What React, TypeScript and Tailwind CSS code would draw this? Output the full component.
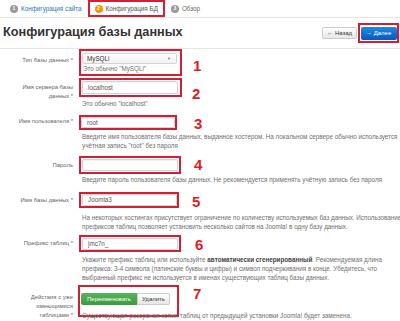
import React from "react";

const RED = "border-[#d21f35]";

function Num({ n, cls }: { n: string; cls: string }) {
  return (
    <div className={`h-[15px] text-[15px] font-bold leading-none text-[#e01b22] ${cls}`}>{n}</div>
  );
}

function Input({ value, cls }: { value: string; cls: string }) {
  return (
    <div
      className={`flex items-center rounded-[2px] border border-[#d4d4d4] bg-white pl-[5px] text-[6.3px] text-[#555] shadow-[inset_0_1px_1px_rgba(0,0,0,0.06)] ${cls}`}
    >
      {value}
    </div>
  );
}

function Help({ children, cls = "" }: { children: React.ReactNode; cls?: string }) {
  return <div className={`whitespace-nowrap text-[6.3px] leading-[9px] text-[#6f6f6f] ${cls}`}>{children}</div>;
}

function Label({ children, cls = "" }: { children: React.ReactNode; cls?: string }) {
  return (
    <div className={`w-[74px] shrink-0 pr-[1px] text-right text-[5.9px] leading-[9px] text-[#666] ${cls}`}>
      {children}
    </div>
  );
}

export default function App() {
  return (
    <div className="h-[321px] w-[400px] overflow-hidden bg-white font-['Liberation_Sans',Arial,sans-serif]">
      {/* Tabs */}
      <div className="flex h-[18px] items-center border-b border-[#e6e6e6] pl-[10px] text-[6.3px]">
        <div className="flex items-center gap-[3px]">
          <span className="flex h-[8px] w-[8px] items-center justify-center rounded-full bg-[#999] text-[5px] font-bold text-white">1</span>
          <span className="text-[#2a78be]">Конфигурация сайта</span>
        </div>
        <div className={`ml-[6px] flex h-[17px] items-center gap-[3px] border-2 ${RED} pl-[5px] pr-[5px]`}>
          <span className="flex h-[8px] w-[8px] items-center justify-center rounded-full bg-[#f89406] text-[5px] font-bold text-white">2</span>
          <span className="text-[#555]">Конфигурация БД</span>
        </div>
        <div className="ml-[6px] flex items-center gap-[3px]">
          <span className="flex h-[8px] w-[8px] items-center justify-center rounded-full bg-[#999] text-[5px] font-bold text-white">3</span>
          <span className="text-[#666]">Обзор</span>
        </div>
      </div>

      {/* Header */}
      <div className="flex h-[31px] items-center justify-between border-b border-[#e6e6e6] pl-[3px] pr-[1px]">
        <div className="text-[12.7px] font-bold text-[#333]">Конфигурация базы данных</div>
        <div className="flex items-center gap-[1px]">
          <div className="flex h-[12px] w-[35px] items-center justify-center gap-[2px] rounded-[2px] border border-[#ccc] bg-gradient-to-b from-white to-[#e6e6e6] text-[6px] text-[#333]">
            <span className="text-[6px]">←</span>Назад
          </div>
          <div className={`flex h-[20px] w-[41px] items-center justify-center border-2 ${RED}`}>
            <div className="flex h-[13px] w-[36px] items-center justify-center gap-[2px] rounded-[2px] bg-gradient-to-b from-[#1f8ae0] to-[#0a58c2] text-[6px] text-white">
              <span className="text-[6px]">→</span>Далее
            </div>
          </div>
        </div>
      </div>

      {/* Row 1 */}
      <div className="flex h-[27px] items-start">
        <Label cls="pt-[7px]">Тип базы данных *</Label>
        <div className={`ml-[5px] h-[27px] w-[103px] border-2 ${RED} pl-[1px] pt-[2px]`}>
          <div className="flex h-[11px] w-[95px] items-center justify-between rounded-[2px] border border-[#d4d4d4] bg-gradient-to-b from-white to-[#f1f1f1] pl-[4px] pr-[5px] text-[6.3px] text-[#333]">
            <span>MySQLi</span>
            <span className="text-[4px] text-[#777]">▼</span>
          </div>
          <Help cls="pl-[1px]">Это обычно "MySQLi"</Help>
        </div>
        <Num n="1" cls="ml-[11px] mt-[9px]" />
      </div>

      {/* Row 2 */}
      <div className="mt-[2px] flex items-start">
        <Label cls="pt-[5px]">
          Имя сервера базы
          <br />
          данных *
        </Label>
        <div className="ml-[5px]">
          <div className="flex h-[19px] items-start">
            <div className={`h-[19px] w-[103px] border-2 ${RED} pl-[1px] pt-[1px]`}>
              <Input value="localhost" cls="h-[13px] w-[96px]" />
            </div>
            <Num n="2" cls="ml-[10px] mt-[8px]" />
          </div>
          <Help cls="mt-[2px] pl-[3px]">Это обычно "localhost"</Help>
        </div>
      </div>

      {/* Row 3 */}
      <div className="mt-[7px] flex items-start">
        <Label cls="pt-[2px]">Имя пользователя *</Label>
        <div className="ml-[5px]">
          <div className="flex h-[15px] items-start">
            <div className={`h-[15px] w-[98px] border-2 ${RED}`}>
              <Input value="root" cls="h-[11px] w-[94px]" />
            </div>
            <Num n="3" cls="ml-[17px] mt-[1px]" />
          </div>
          <Help cls="mt-[2px] pl-[3px]">
            Введите имя пользователя базы данных, выданное хостером. На локальном сервере обычно используется
            <br />
            учётная запись "root" без пароля
          </Help>
        </div>
      </div>

      {/* Row 4 */}
      <div className="mt-[6px] flex items-start">
        <Label cls="pt-[5px]">Пароль</Label>
        <div className="ml-[5px]">
          <div className="flex h-[18px] items-start">
            <div className={`h-[18px] w-[102px] border-2 ${RED} pl-[1px] pt-[1px]`}>
              <Input value="" cls="h-[12px] w-[96px]" />
            </div>
            <Num n="4" cls="ml-[13px] mt-[1px]" />
          </div>
          <Help cls="mt-[1px] pl-[3px]">
            Введите пароль пользователя базы данных. Не рекомендуется применять учётную запись без пароля
          </Help>
        </div>
      </div>

      {/* Row 5 */}
      <div className="mt-[8px] flex items-start">
        <Label cls="pt-[4px]">Имя базы данных *</Label>
        <div className="ml-[5px]">
          <div className="flex h-[16px] items-start">
            <div className={`h-[16px] w-[100px] border-2 ${RED} pl-[1px]`}>
              <Input value="Joomla3" cls="h-[12px] w-[95px]" />
            </div>
            <Num n="5" cls="ml-[13px] mt-[2px]" />
          </div>
          <Help cls="mt-[5px] pl-[3px] leading-[8.5px]">
            На некоторых хостингах присутствует ограничение по количеству используемых баз данных. Использование
            <br />
            префиксов таблиц позволяет установить несколько сайтов на Joomla! в одну базу данных.
          </Help>
        </div>
      </div>

      {/* Row 6 */}
      <div className="mt-[4px] flex items-start">
        <Label cls="pt-[4px]">Префикс таблиц *</Label>
        <div className="ml-[5px]">
          <div className="flex h-[17px] items-start">
            <div className={`h-[17px] w-[102px] border-2 ${RED} pl-[1px] pt-[1px]`}>
              <Input value="jmc7n_" cls="h-[12px] w-[96px]" />
            </div>
            <Num n="6" cls="ml-[14px] mt-[2px]" />
          </div>
          <Help cls="mt-[3px] pl-[3px] leading-[8.5px]">
            Укажите префикс таблиц или используйте <b className="text-[#444]">автоматически сгенерированный</b>. Рекомендуемая длина
            <br />
            префикса: 3-4 символа (латинские буквы и цифры) и символ подчеркивания в конце. Убедитесь, что
            <br />
            выбранный префикс не используется в именах существующих таблиц базы данных.
          </Help>
        </div>
      </div>

      {/* Row 7 */}
      <div className="mt-[3px] flex items-start">
        <Label cls="pt-[8px]">
          Действия с уже
          <br />
          имеющимися
          <br />
          таблицами *
        </Label>
        <div className="ml-[4px]">
          <div className="flex h-[32px] items-start">
            <div className={`h-[32px] w-[101px] border-2 ${RED} pl-[1px] pt-[6px]`}>
              <div className="flex h-[12px] items-stretch text-[6px]">
                <div className="flex w-[56px] items-center justify-center rounded-l-[2px] bg-gradient-to-b from-[#58b458] to-[#3f9a3f] text-white">
                  Переименовать
                </div>
                <div className="flex w-[33px] items-center justify-center rounded-r-[2px] border border-[#ccc] bg-gradient-to-b from-white to-[#e6e6e6] text-[#333]">
                  Удалить
                </div>
              </div>
            </div>
            <Num n="7" cls="ml-[14px] mt-[1px]" />
          </div>
          <Help cls="-mt-[6px] pl-[4px]">
            Существующая резервная копия таблиц от предыдущей установки Joomla! будет заменена.
          </Help>
        </div>
      </div>
    </div>
  );
}
